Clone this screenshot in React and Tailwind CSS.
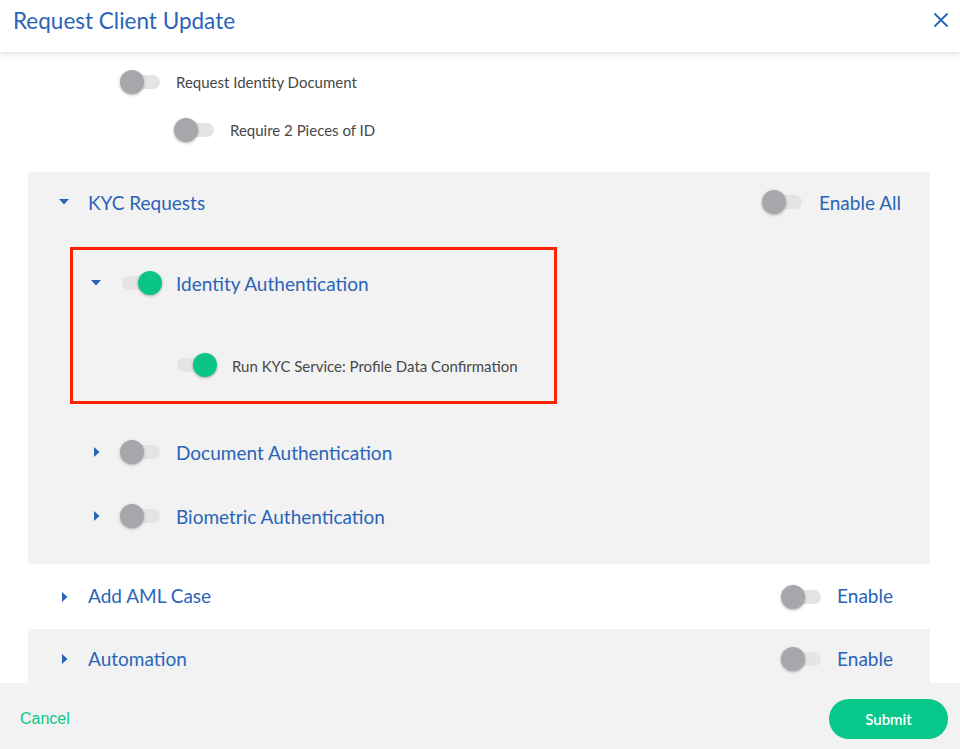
import React from "react";

const FONT = { fontFamily: "Lato, 'Noto Sans', sans-serif" };

function Toggle({ on = false }) {
  return (
    <div className="relative w-[42px] h-6 shrink-0">
      <div className="absolute left-[2px] right-[2px] top-[5px] h-[14px] rounded-full bg-[#e4e4e4]" />
      <div
        className={
          on
            ? "absolute right-0 top-0 w-6 h-6 rounded-full bg-[#0bc587] shadow-[0_1px_3px_rgba(0,0,0,0.3)]"
            : "absolute left-0 top-0 w-6 h-6 rounded-full bg-[#a5a7ab] shadow-[0_1px_3px_rgba(0,0,0,0.3)]"
        }
      />
    </div>
  );
}

function CaretDown() {
  return (
    <svg width="10" height="6" viewBox="0 0 10 6" className="shrink-0">
      <path d="M0 0 H10 L5 5.5 Z" fill="#2a64b8" />
    </svg>
  );
}

function CaretRight() {
  return (
    <svg width="6" height="10" viewBox="0 0 6 10" className="shrink-0">
      <path d="M0 0 V10 L5.5 5 Z" fill="#2a64b8" />
    </svg>
  );
}

export default function App() {
  return (
    <div className="w-[960px] h-[749px] flex flex-col bg-white overflow-hidden" style={FONT}>
      {/* Header */}
      <div className="relative z-10 h-[52px] shrink-0 flex items-center justify-between pl-[13px] pr-[12px] bg-white shadow-[0_2px_6px_rgba(0,0,0,0.12)]">
        <div className="text-[22.5px] text-[#2a64b8] leading-none -mt-[10px]">Request Client Update</div>
        <svg width="14" height="14" viewBox="0 0 14 14" className="-mt-[12px]">
          <path d="M1 1 L13 13 M13 1 L1 13" stroke="#2a64b8" strokeWidth="1.8" strokeLinecap="round" />
        </svg>
      </div>

      {/* Content */}
      <div className="flex-1 overflow-hidden">
        <div className="pt-[18px] pl-[120px] flex flex-col gap-6">
          <div className="flex items-center gap-[14px] h-6">
            <Toggle />
            <span className="text-[15px] text-[#474747]">Request Identity Document</span>
          </div>
          <div className="flex items-center gap-[14px] h-6 pl-[54px]">
            <Toggle />
            <span className="text-[15px] text-[#474747]">Require 2 Pieces of ID</span>
          </div>
        </div>

        {/* KYC panel */}
        <div className="mt-[30px] ml-[28px] w-[902px] bg-[#f2f2f2] pt-[18px] pb-[36px]">
          <div className="flex items-center h-6 pl-[31px] pr-[29px]">
            <CaretDown />
            <span className="ml-[19px] text-[19px] text-[#2a64b8] flex-1 mt-[2px]">KYC Requests</span>
            <Toggle />
            <span className="ml-[15px] text-[19px] text-[#2a64b8] mt-[2px]">Enable All</span>
          </div>

          <div className="mt-[33px] ml-[42px] w-[487px] h-[157px] border-[3px] border-[#ff2200] flex flex-col">
            <div className="flex items-center h-6 mt-[21px] pl-[18px]">
              <CaretDown />
              <span className="ml-[19px]"><Toggle on /></span>
              <span className="ml-[14px] text-[19px] text-[#2a64b8] mt-[3px]">Identity Authentication</span>
            </div>
            <div className="flex items-center h-6 mt-[58px] pl-[102px]">
              <Toggle on />
              <span className="ml-[15px] text-[15px] text-[#474747] mt-[2px]">Run KYC Service: Profile Data Confirmation</span>
            </div>
          </div>

          <div className="flex items-center h-6 mt-[36px] pl-[66px]">
            <CaretRight />
            <span className="ml-[20px]"><Toggle /></span>
            <span className="ml-[14px] text-[19px] text-[#2a64b8] mt-[2px]">Document Authentication</span>
          </div>
          <div className="flex items-center h-6 mt-[40px] pl-[66px]">
            <CaretRight />
            <span className="ml-[20px]"><Toggle /></span>
            <span className="ml-[14px] text-[19px] text-[#2a64b8] mt-[2px]">Biometric Authentication</span>
          </div>
        </div>

        {/* AML */}
        <div className="ml-[28px] w-[902px] h-[65px] bg-white flex items-center pl-[34px] pr-[37px]">
          <CaretRight />
          <span className="ml-[20px] text-[19px] text-[#2a64b8] flex-1">Add AML Case</span>
          <Toggle />
          <span className="ml-[14px] text-[19px] text-[#2a64b8]">Enable</span>
        </div>
        {/* Automation */}
        <div className="ml-[28px] w-[902px] h-[65px] bg-[#f2f2f2] flex items-start pt-[18px] pl-[34px] pr-[37px]">
          <div className="h-6 flex items-center"><CaretRight /></div>
          <span className="ml-[20px] text-[19px] text-[#2a64b8] flex-1 leading-6">Automation</span>
          <Toggle />
          <span className="ml-[14px] text-[19px] text-[#2a64b8] leading-6">Enable</span>
        </div>
      </div>

      {/* Footer */}
      <div className="h-[66px] shrink-0 bg-[#f2f2f2] flex items-center justify-between pt-[6px] pl-[20px] pr-[12px]">
        <span className="text-[16px] text-[#0cc988]" style={{ fontFamily: "'Liberation Sans', Arial, sans-serif" }}>Cancel</span>
        <button className="w-[119px] h-[40px] rounded-full bg-[#08c78a] text-white text-[15px] font-semibold">Submit</button>
      </div>
    </div>
  );
}
